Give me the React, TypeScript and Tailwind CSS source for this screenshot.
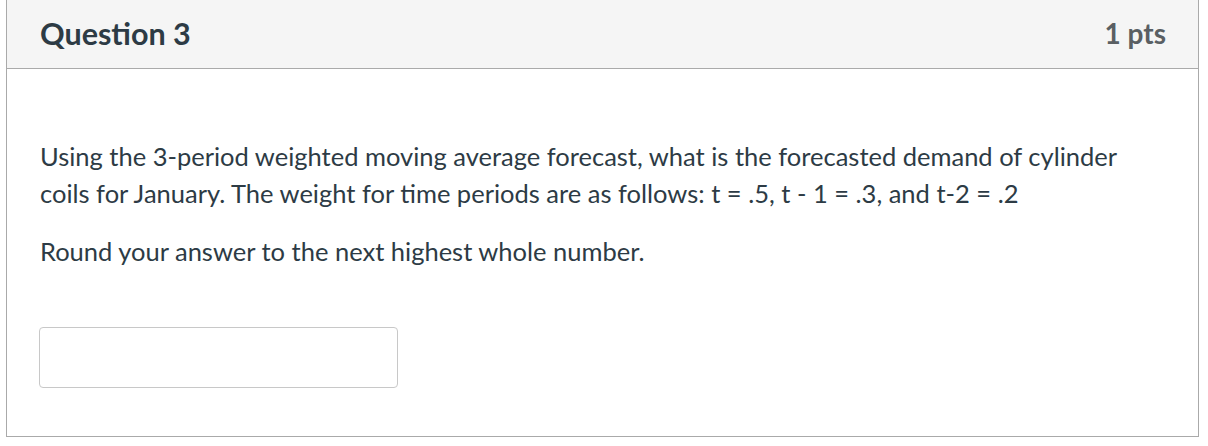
export default function App() {
  return (
    <div className="w-[1208px] h-[446px] bg-white" style={{ fontFamily: 'Lato, "Liberation Sans", sans-serif' }}>
      <div className="ml-[6px] w-[1193px] border-x border-b border-[#aaaaaa] text-[#2d3b45]">
        <div className="h-[69px] flex items-center justify-between pl-[33px] pr-[32px] pb-[2px] bg-[#f5f5f5] border-b border-[#aaaaaa]">
          <h2 className="text-[30.5px] font-bold leading-none">Question 3</h2>
          <div className="text-[28px] font-bold text-[#5a5f63] leading-none">1 pts</div>
        </div>
        <div className="pl-[33px] pr-[50px] pt-[69px] pb-[48px]">
          <p className="text-[25.5px] leading-[37px]">
            Using the 3-period weighted moving average forecast, what is the forecasted demand of cylinder coils for
            January. The weight for time periods are as follows: t = .5, t - 1 = .3, and t-2 = .2
          </p>
          <p className="text-[25.5px] leading-[37px] mt-[21px]">Round your answer to the next highest whole number.</p>
          <div className="mt-[57px]">
            <input
              type="text"
              className="-ml-px w-[359px] h-[61px] rounded-[4px] border border-[#c8c8c8] bg-white outline-none px-3"
            />
          </div>
        </div>
      </div>
    </div>
  );
}
